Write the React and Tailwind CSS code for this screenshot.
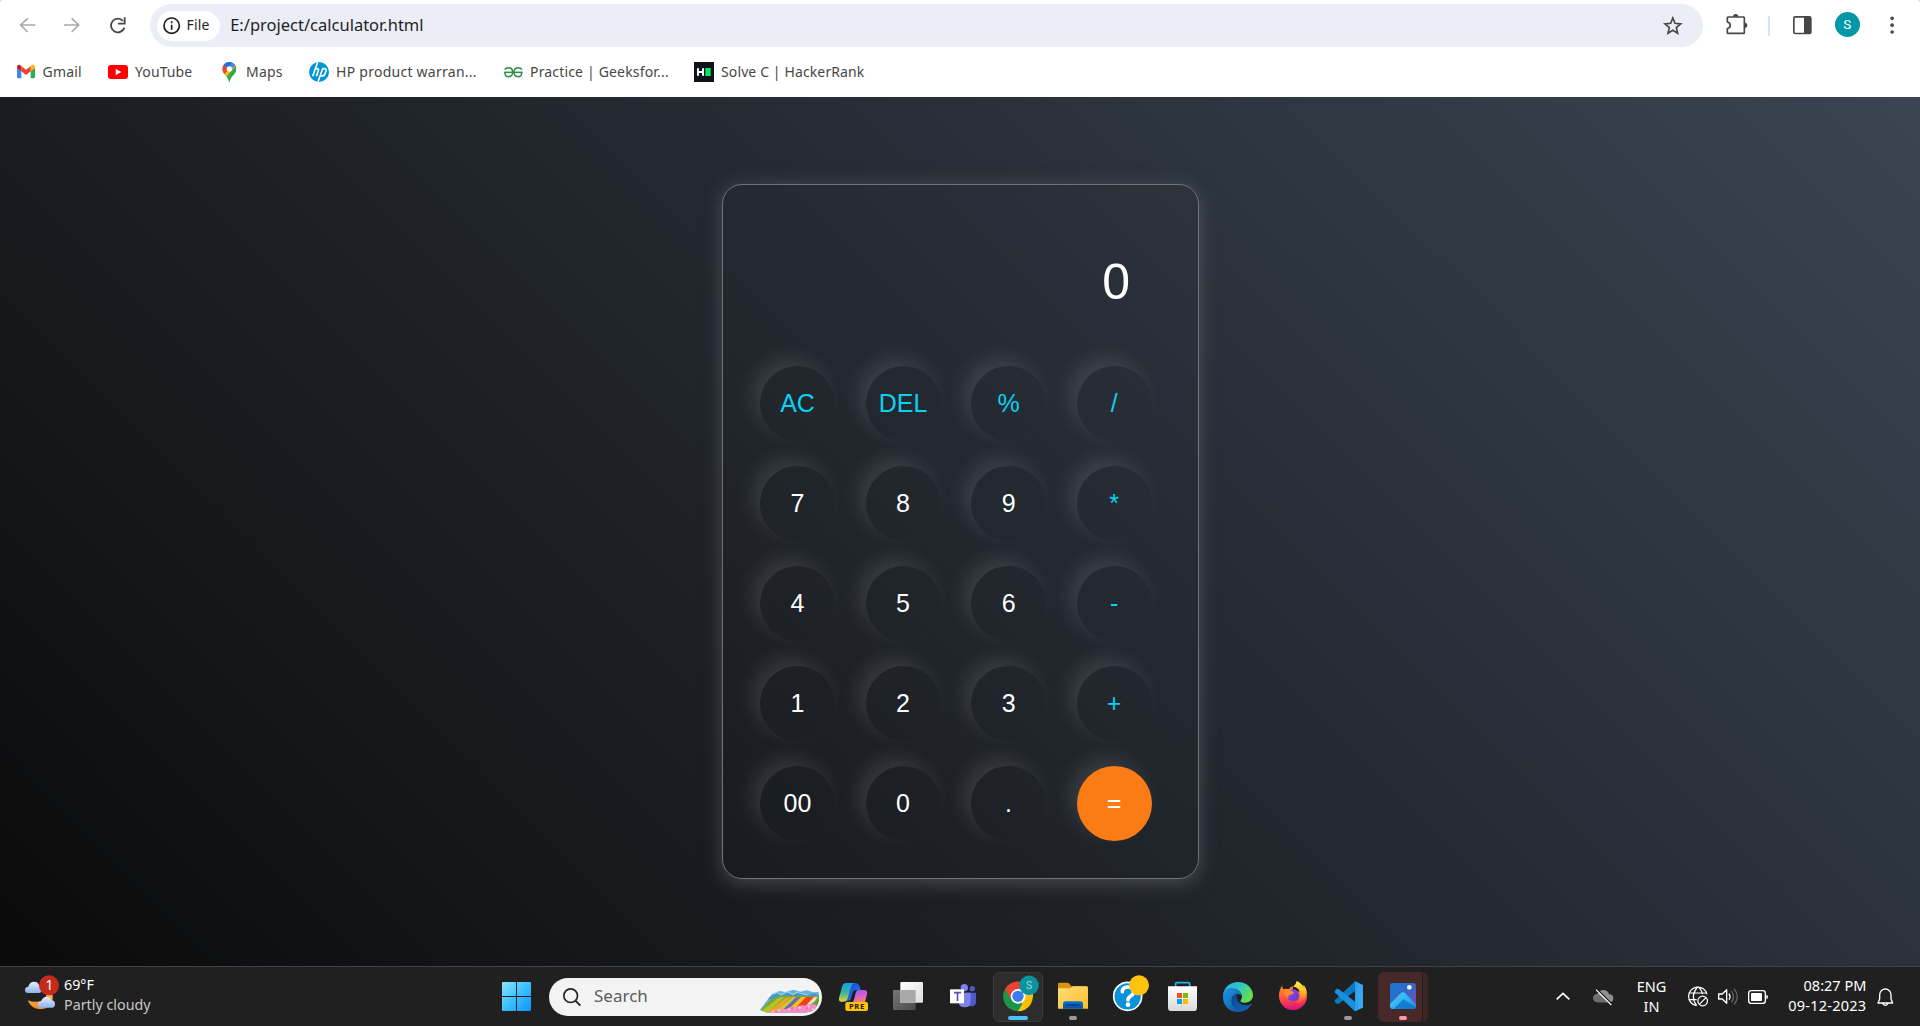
import React from "react";

/* Icons are drawn on a grid of three units per pixel. */
function Icon({ box, children, className = "" }) {
  const [, , w, h] = box.split(" ").map(Number);
  return (
    <svg
      viewBox={box}
      width={w / 3}
      height={h / 3}
      fill="none"
      className={"block shrink-0 overflow-visible " + className}
    >
      {children}
    </svg>
  );
}

const Gmail = () => (
  <Icon box="48 195 54 40">
    <path d="M48 202v29q0 4 4 4h9v-23z" fill="#4285f4" />
    <path d="M102 202v29q0 4-4 4h-9v-23z" fill="#34a853" />
    <path d="M89 199v15l13-10v-3c0-6-6-8-10-5z" fill="#fbbc04" />
    <path d="M61 214v-15l14 10 14-10v15l-14 11z" fill="#ea4335" />
    <path d="M48 201v3l13 10v-15l-3-3c-4-3-10-1-10 5z" fill="#c5221f" />
  </Icon>
);

const YouTube = () => (
  <Icon box="324 195 60 42">
    <rect x="324" y="195" width="60" height="42" rx="9" fill="#f00" />
    <path d="M347 206l17 10-17 10z" fill="#fff" />
  </Icon>
);

const Maps = () => (
  <Icon box="665 186 43 60">
    <defs>
      <clipPath id="pin">
        <path d="M687 186a21 21 0 0 1 21 21c0 15-17 20-20 37q-1 3-2 0c-3-17-20-22-20-37a21 21 0 0 1 21-21z" />
      </clipPath>
    </defs>
    <g clipPath="url(#pin)">
      <path d="M660 180h50v70h-50z" fill="#34a853" />
      <path d="M660 225l35-38 20-5v12l-40 42z" fill="#fbbc04" />
      <path d="M660 225v-40l27 22-19 19z" fill="#ea4335" />
      <path d="M668 192l12-10h18l-11 25z" fill="#1a73e8" />
      <path d="M697 182l14 12-24 15z" fill="#4285f4" />
      <path d="M712 192l-19 20-18 24 13 12 24-20z" fill="#34a853" />
    </g>
    <circle cx="687" cy="207" r="8" fill="#fff" />
  </Icon>
);

const Hp = () => (
  <Icon box="927 186 60 60">
    <circle cx="957" cy="216" r="30" fill="#0096d6" />
    <path
      d="M953 187l-15 42M944 210q3-4 7-4 6 0 4 6l-6 17M968 206l-14 39M967 206h6q7 0 5 7l-3 8q-2 7-9 7h-6"
      stroke="#fff"
      strokeWidth="5"
    />
  </Icon>
);

const Gfg = () => (
  <Icon box="132 200 56 32">
    <g stroke="#2f8d46" strokeWidth="4.5">
      <path d="M134 208q4-6 11-6 13 0 13 14 0 13-12 13-11 0-11-12" />
      <path d="M186 208q-4-6-11-6-13 0-13 14 0 13 12 13 11 0 11-12" />
      <path d="M132 216h56" />
    </g>
  </Icon>
);

const HackerRank = () => (
  <Icon box="702 186 60 60">
    <path d="M702 186h60v60h-60z" fill="#0e141e" />
    <path d="M714 205v22M729 205v22M714 216h15" stroke="#fff" strokeWidth="6" />
    <path d="M736 204h16v24h-16z" fill="#00ea64" />
  </Icon>
);

const BOOKMARKS = [
  { icon: <Gmail />, label: "Gmail", cls: "w-[92px]", text: "ml-[-0.5px] tracking-[0.2px]" },
  { icon: <YouTube />, label: "YouTube", cls: "w-[111px]", text: "tracking-[0.1px]" },
  { icon: <Maps />, label: "Maps", cls: "w-[90px]", text: "tracking-[0.2px]" },
  { icon: <Hp />, label: "HP product warran...", cls: "w-[194px]", text: "tracking-[0.26px]" },
  { icon: <Gfg />, label: "Practice | Geeksfor...", cls: "w-[191px]", text: "tracking-[0.17px]" },
  { icon: <HackerRank />, label: "Solve C | HackerRank", cls: "w-[180px]", text: "tracking-[0.12px]" },
];

function Toolbar() {
  return (
    <div className="flex h-[51px] items-center pl-[20px]">
      <Icon box="60 53 46 43" className="mr-[29px]">
        <path d="M106 74H63M83 54L62 74l21 21" stroke="#a9a9a9" strokeWidth="5" />
      </Icon>
      <Icon box="194 53 46 43" className="mr-[30px]">
        <path d="M194 74h43M217 54l21 20-21 21" stroke="#a9a9a9" strokeWidth="5" />
      </Icon>
      <Icon box="329 50 48 50" className="mr-[24px]">
        <path d="M368 62a20.500 20.500 0 1 0 4 20" stroke="#474747" strokeWidth="5.500" />
        <path d="M373 51v19h-20" stroke="#474747" strokeWidth="5.500" />
      </Icon>
      <div className="flex h-[43px] w-[1553px] items-center rounded-full bg-[#ebeef7] pl-[7px] pr-[20.5px]">
        <div className="flex h-[30px] w-[63px] items-center rounded-full bg-white pl-[6px]">
          <Icon box="488 50 52 52" className="mr-[6.5px]">
            <circle cx="514" cy="76" r="23" stroke="#1f1f1f" strokeWidth="5" />
            <path d="M514 73v15M514 63v5.500" stroke="#1f1f1f" strokeWidth="5" />
          </Icon>
          <span className="mt-[-1px] text-[14px] leading-5 tracking-[0.2px] text-[#1f1f1f]">File</span>
        </div>
        <span className="ml-[10.5px] mt-[-1px] text-[16.5px] leading-5 text-[#1f1f1f]">E:/project/calculator.html</span>
        <Icon box="188 47 59 58" className="ml-auto">
          <path
            d="M217.500 53l6.500 16 17 1.500-13 11.500 4 17-14.500-9-14.500 9 4-17-13-11.500 17-1.500z"
            stroke="#474747"
            strokeWidth="5"
          />
        </Icon>
      </div>
      <Icon box="377 42 64 62" className="ml-[23px] mr-[21px] mt-[-2px]">
        <path
          d="M383 51h47q2 0 2 2v45q0 2-2 2h-47q-2 0-2-2V86q9-2 9-10t-9-10V53q0-2 2-2z"
          stroke="#474747"
          strokeWidth="5"
          strokeLinejoin="round"
        />
        <path d="M398 50a8 8 0 0 1 16 0zM433 68a8 8 0 0 1 0 16z" fill="#474747" />
      </Icon>
      <div className="mr-[23px] h-[20px] w-[2px] bg-[#d3e3fd]" />
      <Icon box="579 48 56 55" className="mr-[23px]">
        <rect x="581.500" y="50.500" width="51" height="50" rx="4" stroke="#474747" strokeWidth="5" />
        <path d="M612 50h20v51h-20z" fill="#474747" />
      </Icon>
      <div className="mt-[-2px] flex size-[25px] items-center justify-center rounded-full bg-[#0097a7] font-['Roboto'] text-[13.5px] text-white">
        S
      </div>
      <Icon box="871 47 13 55" className="ml-[30px] mt-[-1px]">
        <g fill="#474747">
          <circle cx="877.500" cy="54" r="5.500" />
          <circle cx="877.500" cy="74.500" r="5.500" />
          <circle cx="877.500" cy="95" r="5.500" />
        </g>
      </Icon>
    </div>
  );
}

function Browser() {
  return (
    <header className="h-[97px] bg-[#d3e3fd]">
      <div className="h-full rounded-t-[4px] bg-white">
        <Toolbar />
        <div className="flex h-[42px] items-center pl-[16px]">
          {BOOKMARKS.map((b) => (
            <div key={b.label} className={"flex shrink-0 items-center " + b.cls}>
              <div className="mr-[7px] flex w-[20px] shrink-0 justify-center">{b.icon}</div>
              <span className={"whitespace-nowrap text-[14px] leading-5 text-[#474747] " + b.text}>{b.label}</span>
            </div>
          ))}
        </div>
      </div>
    </header>
  );
}

const KEYS = [
  "AC", "DEL", "%", "/",
  "7", "8", "9", "*",
  "4", "5", "6", "-",
  "1", "2", "3", "+",
  "00", "0", ".", "=",
];
const OPERATORS = ["AC", "DEL", "%", "/", "*", "-", "+"];

function Calculator() {
  return (
    <div className="mt-[87px] h-[695px] w-[477px] rounded-[20px] border border-[#717377] pl-[37.5px] pt-[65px] font-['Liberation_Sans',Arial,sans-serif] shadow-[0_3.75px_18.75px_rgba(113,115,119,0.5)]">
      <div className="mr-[67.5px] h-[116px] text-right text-[50px] leading-[64px] text-white">0</div>
      <div className="grid grid-cols-[repeat(4,75px)] gap-x-[30.55px] gap-y-[25px]">
        {KEYS.map((k) => (
          <button
            key={k}
            className={
              "flex size-[75px] items-center justify-center rounded-full text-[25px] leading-none shadow-[-8px_-8px_20px_rgba(255,255,255,0.11)] " +
              (k === "=" ? "bg-[#fb7c14] text-white" : OPERATORS.includes(k) ? "text-[#0ad1f0]" : "text-white")
            }
          >
            {k}
          </button>
        ))}
      </div>
    </div>
  );
}

const Gradient = ({ id, a, b, m, x2 = 1, y2 = 1 }) => (
  <linearGradient id={id} x1="0" y1="0" x2={x2} y2={y2}>
    <stop stopColor={a} />
    {m && <stop offset=".5" stopColor={m} />}
    <stop offset="1" stopColor={b} />
  </linearGradient>
);

const Weather = () => (
  <Icon box="75 40 102 103">
    <defs>
      <Gradient id="moon" a="#ffc34a" b="#f08a1d" x2={0} />
      <Gradient id="cloud" a="#e6effc" b="#8fb1ea" x2={0} />
    </defs>
    <path d="M138 96q4 14-10 20-20 9-45 0 10 25 37 27 25 0 36-21 6-18-3-32z" fill="url(#moon)" />
    <path d="M84 94q-9 0-9-9t10-10q4-15 17-15 13 0 16 13 8 2 7 11 0 10-9 10z" fill="url(#cloud)" />
    <path d="M123 138q-10 0-10-9t10-10q5-14 17-14 11 0 14 11 11 1 11 11 0 11-9 11z" fill="url(#cloud)" />
    <circle cx="147" cy="71" r="30" fill="#c42b1c" />
    <text x="148" y="86" textAnchor="middle" fontSize="41" fill="#fff">1</text>
  </Icon>
);

const Start = () => (
  <Icon box="66 66 87 87">
    <defs>
      <linearGradient id="win" gradientUnits="userSpaceOnUse" x1="66" y1="66" x2="153" y2="153">
        <stop stopColor="#8be4ff" />
        <stop offset=".5" stopColor="#3bc0ff" />
        <stop offset="1" stopColor="#0b93fa" />
      </linearGradient>
    </defs>
    <path
      fill="url(#win)"
      d="M69 66h39v42H66V69q0-3 3-3zM111 66h39q3 0 3 3v39h-42zM66 111h42v42H69q-3 0-3-3zM111 111h42v39q0 3-3 3h-39z"
    />
  </Icon>
);

const Fields = () => (
  <Icon box="840 88 180 71">
    <defs>
      <clipPath id="field">
        <path d="M840 150l36-47 22-9 20 3 22-7 22 6 18-4 20 6 16-1 1 20q-3 26-20 37l-22 5H860z" />
      </clipPath>
    </defs>
    <g clipPath="url(#field)">
      <path d="M840 85h180v75H840z" fill="#62b4e2" />
      <path d="M870 112l20-13 14 10 18-12 16 10 22-11 24 11 20-6 20 10v8H860z" fill="#4496cc" />
      <path d="M880 103l12-4 10 6 20-8 16 7 14-6 30 8" stroke="#a9d8f0" strokeWidth="3" />
      <path d="M835 158l36-38 30-12h120v52z" fill="#7aa83a" />
      <path d="M840 158l56-44 18-3-50 47z" fill="#b4c42c" />
      <path d="M862 158l56-44 16-3-50 47z" fill="#f0a423" />
      <path d="M884 156l54-44h10l-36 46z" fill="#d8c43a" />
      <path d="M902 156l46-43h14l-36 43z" fill="#6a6cb2" />
      <path d="M922 152l42-40h14l-32 40z" fill="#f5c01e" />
      <path d="M944 148l34-36h26l-28 34z" fill="#e8431e" />
      <path d="M972 144l30-32h10l-16 28z" fill="#f3dfb8" />
      <path d="M986 138l32-22v26z" fill="#6a9e3a" />
      <path d="M866 160q12-12 26-7 10-8 26-5 14-9 30-5 14-9 28-5 14-6 34-3v26z" fill="#f58cc8" />
      <path d="M876 156h6M894 152h6M924 149h6M956 144h6M984 141h6M996 149h6" stroke="#ffc9e7" strokeWidth="5" />
      <path d="M886 158h5M934 147h5M950 151h5M978 146h5" stroke="#ea62ad" strokeWidth="5" />
    </g>
  </Icon>
);

const Copilot = () => (
  <Icon box="57 69 87 84">
    <defs>
      <Gradient id="cpA" a="#1c9bf0" m="#35b3a0" b="#e2d430" x2={0} />
      <Gradient id="cpB" a="#8f5ff0" m="#d65bd8" b="#ff8a4c" x2={0.3} />
      <Gradient id="cpC" a="#1346c8" b="#2b7df0" />
    </defs>
    <path d="M80 69h26q10 0 13 11l3 10h-12q-10 0-13 10l-6 20-16 5z" fill="url(#cpC)" />
    <path d="M78 69h24q-6 2-9 12l-10 34q-3 10-12 10H64q-9 0-7-11l9-34q3-11 12-11z" fill="url(#cpA)" />
    <path d="M117 90h14q13 0 10 12l-8 32H95q-3-2 1-6 4-3 6-9l5-20q2-9 10-9z" fill="url(#cpB)" />
    <rect x="76" y="126" width="68" height="27" rx="6" fill="#ffc20a" />
    <text x="111" y="148" textAnchor="middle" fontSize="23" fontWeight="700" letterSpacing="2" fill="#221a00">PRE</text>
  </Icon>
);

const TaskView = () => (
  <Icon box="219 66 90 84">
    <defs>
      <Gradient id="tvA" a="#fff" b="#dcdcdc" />
      <Gradient id="tvB" a="#767676" b="#4b4b4b" />
    </defs>
    <rect x="219" y="90" width="68" height="60" rx="3" fill="url(#tvB)" />
    <rect x="241" y="66" width="68" height="62" rx="3" fill="url(#tvA)" />
    <path d="M241 90h46v38h-44q-2 0-2-2z" fill="#a9a9a9" />
  </Icon>
);

const Teams = () => (
  <Icon box="390 71 78 70">
    <circle cx="457" cy="85" r="8" fill="#5059c9" />
    <path d="M440 97h28v28q0 13-14 13h-8z" fill="#5059c9" />
    <circle cx="433" cy="82" r="11" fill="#7b83eb" />
    <path d="M416 97h36v24q0 20-18 20t-18-16z" fill="#7b83eb" />
    <rect x="390" y="87" width="42" height="42" fill="#fff" />
    <path d="M402 97h21M412.500 97v25" stroke="#4b53bc" strokeWidth="5" />
  </Icon>
);

const Chrome = () => (
  <Icon box="549 44 108 109">
    <path d="M555 86A45 45 0 0 1 633 86L594 108z" fill="#ea4335" />
    <path d="M633 86A45 45 0 0 1 594 153L594 108z" fill="#fbbc04" />
    <path d="M555 86A45 45 0 0 0 594 153L614 119 594 108z" fill="#1e9447" />
    <path d="M594 86h39q7 12 6 24l-22 10-4 7-19 26q12 0 22-6l-12-20z" fill="#fcc31e" />
    <path d="M555 86l20 33 19-33z" fill="#ea4335" />
    <circle cx="594" cy="108" r="22" fill="#fff" />
    <circle cx="594" cy="108" r="17" fill="#3b7ded" />
    <circle cx="627" cy="75" r="29.500" fill="#0a929f" />
    <text x="627" y="86" textAnchor="middle" fontFamily="Roboto" fontSize="31" fill="#9fd8de">S</text>
  </Icon>
);

const Folder = () => (
  <Icon box="714 64 90 92">
    <defs>
      <Gradient id="fo" a="#ffdf7b" b="#fdbb2b" />
      <Gradient id="foB" a="#0a74cf" b="#0450a5" x2={0} />
    </defs>
    <path d="M714 73q0-4 4-4h25q3 0 5 3l6 8h46v30h-86z" fill="#d9960c" />
    <path d="M714 86h36l9-6h41q4 0 4 4v63h-90z" fill="url(#fo)" />
    <path d="M729 147v-14q0-8 8-8h44q8 0 8 8v14z" fill="url(#foB)" />
    <path d="M740 136h38" stroke="#033a78" strokeWidth="4" strokeLinecap="round" />
  </Icon>
);

const Help = () => (
  <Icon box="879 44 108 110">
    <circle cx="923" cy="108" r="42" fill="#0a93d8" stroke="#fff" strokeWidth="5" />
    <path
      d="M907 94q0-14 17-14t17 13q0 9-9 14-8 5-8 12"
      stroke="#fff"
      strokeWidth="11"
      strokeLinecap="round"
    />
    <circle cx="924" cy="133" r="7" fill="#fff" />
    <circle cx="957" cy="75" r="30" fill="#ffc20e" />
  </Icon>
);

const Store = () => (
  <Icon box="114 66 87 87">
    <defs>
      <Gradient id="st" a="#fff" b="#d9d9d9" x2={0} />
    </defs>
    <path d="M137 82V71q0-3 3-3h36q3 0 3 3v11" stroke="#1fb5ee" strokeWidth="5" />
    <path d="M114 79h87v64q0 10-10 10h-67q-10 0-10-10z" fill="url(#st)" />
    <path d="M141 99h15v15h-15z" fill="#f25022" />
    <path d="M159 99h15v15h-15z" fill="#7fba00" />
    <path d="M141 117h15v15h-15z" fill="#00a4ef" />
    <path d="M159 117h15v15h-15z" fill="#ffb900" />
  </Icon>
);

const Edge = () => (
  <Icon box="279 63 90 90">
    <defs>
      <Gradient id="edA" a="#27a8ea" m="#2fc4c8" b="#64dd52" y2={0.5} />
      <Gradient id="edB" a="#1f9ae6" b="#0d4f9e" />
      <Gradient id="edC" a="#0c4a90" b="#1267b8" />
    </defs>
    <path d="M279 104c2-24 20-41 45-41 28 0 45 20 45 40 0 14-11 22-24 22-11 0-16-4-12-9 10-13-4-31-23-27-14 3-26 6-31 15z" fill="url(#edA)" />
    <path d="M279 108c0-18 12-27 26-27 17 0 29 10 30 25-7-11-25-9-29 5-5 17 8 40 30 40-4 1-8 2-12 2-25 0-45-18-45-45z" fill="url(#edB)" />
    <path d="M306 111c3-8 9-11 15-11-5 11 4 31 24 33 8 0 13-2 18-5 2-1 3 0 2 2-9 15-22 22-35 22-18-3-28-23-24-41z" fill="url(#edC)" />
  </Icon>
);

const Firefox = () => (
  <Icon box="447 63 84 87">
    <defs>
      <Gradient id="ffA" a="#ff9a1f" m="#ff5a3c" b="#e0127c" x2={0.1} />
      <Gradient id="ffB" a="#fff24d" m="#ffb42a" b="#ff4a3c" x2={0} />
      <Gradient id="ffC" a="#a14df0" b="#5a35c8" />
    </defs>
    <path d="M457 75q-2 7 3 13 8-3 16 0 4-8 14-10-4 6 0 12l16 5q8 0 10-12l4-8q11 14 11 32a42 42 0 0 1-84 2c-1-14 4-22 10-34z" fill="url(#ffA)" />
    <circle cx="489" cy="106" r="18" fill="url(#ffC)" />
    <path d="M500 63q-2 10-10 17 16 2 19 16 5 24-14 34 32-2 35-29 0-16-8-25l1 9q-7-15-23-22z" fill="url(#ffB)" />
    <path d="M461 92q8-5 18-2l13 8q-4 6-13 6-6 4-4 11-12-8-14-23z" fill="#ff8b22" />
  </Icon>
);

const VsCode = () => (
  <Icon box="609 62 90 92">
    <path d="M675 63l24 11v68l-24 11z" fill="#33a9f2" />
    <path d="M675 63l-60 56q-3 3 0 6l5 5q3 2 6 0l49-38z" fill="#0a78c4" />
    <path d="M675 153l-60-56q-3-3 0-6l5-5q3-2 6 0l49 38z" fill="#1b8fdc" />
    <path d="M675 63l8 4v82l-8 4z" fill="#2aa0ea" />
  </Icon>
);

const Photos = () => (
  <Icon box="780 69 78 78">
    <defs>
      <Gradient id="phA" a="#0f7bd6" m="#3767c2" b="#7b4fae" />
      <Gradient id="phB" a="#4cd2fb" b="#1a8fe3" />
      <clipPath id="ph">
        <rect x="780" y="69" width="78" height="78" rx="9" />
      </clipPath>
    </defs>
    <g clipPath="url(#ph)">
      <path d="M780 69h78v78h-78z" fill="url(#phA)" />
      <path d="M780 132l32-32q7-7 14 0l34 36v14h-80z" fill="url(#phB)" />
      <path d="M790 148l30-30 38 24v8z" fill="#0b6fc9" opacity=".75" />
    </g>
    <circle cx="838" cy="82" r="7" fill="#f4f6fb" />
  </Icon>
);

function Cell({ children, bar = "", tile = "", shift = "" }) {
  return (
    <div className="relative flex h-full w-[55px] shrink-0 items-center justify-center">
      <div className={"flex size-[50px] items-center justify-center rounded-[6px] " + tile}>
        <div className={"relative " + shift}>{children}</div>
      </div>
      {bar && <div className={"absolute bottom-[6px] h-[4px] rounded-full " + bar} />}
    </div>
  );
}

function Tray() {
  return (
    <div className="ml-auto flex items-center pr-[26px] text-white">
      <Icon box="79 96 42 25" className="mr-[22.5px]">
        <path d="M81 118l19-18 19 18" stroke="#fff" strokeWidth="5" />
      </Icon>
      <Icon box="188 84 62 48" className="mr-[22.5px]">
        <path d="M202 124q-14-2-13-15 2-10 12-10 7-13 20-12 12 1 15 12 13 1 13 13 0 12-12 12z" fill="#8f8f8f" />
        <path d="M189 110q2-11 12-11l40 25h-39q-12-1-13-14z" fill="#6e6e6e" />
        <path d="M200 85l46 46" stroke="#202020" strokeWidth="5" />
        <path d="M197 86l46 46" stroke="#fff" strokeWidth="3.500" />
      </Icon>
      <div className="mr-[21px] mt-[-2px] w-[31px] text-center text-[14.5px] leading-[20px]">
        ENG
        <br />
        IN
      </div>
      <Icon box="474 77 62 62" className="mr-[9.5px]">
        <g stroke="#fff" strokeWidth="3.600">
          <path d="M500 136a28 28 0 1 1 31-34M477 98h54M476 118h24M504 79q-26 28-4 57M504 79q12 10 13 22" />
          <circle cx="518" cy="122" r="14.500" />
          <path d="M508 132l20-20" />
        </g>
      </Icon>
      <Icon box="564 82 62 52" className="mr-[9.5px]">
        <path d="M566 100h11l13-13v41l-13-13h-11z" stroke="#fff" strokeWidth="4" strokeLinejoin="round" />
        <path d="M597 99q6 9 0 18" stroke="#fff" strokeWidth="4" />
        <path d="M604 91q13 17 0 34M612 84q20 24 0 48" stroke="#6a6a6a" strokeWidth="3.500" />
      </Icon>
      <Icon box="654 87 60 42">
        <rect x="656" y="89" width="50" height="38" rx="8" stroke="#fff" strokeWidth="4" />
        <rect x="663" y="96" width="33" height="24" rx="2" fill="#fff" />
        <path d="M709 101q5 1 5 7t-5 7z" fill="#fff" />
      </Icon>
      <div className="mt-[-3px] w-[98px] text-right text-[14.5px] leading-[20px]">
        08:27 PM
        <br />
        <span className="tracking-[0.25px]">09-12-2023</span>
      </div>
      <Icon box="1040 82 50 54" className="ml-[11px]">
        <path
          d="M1043 127l5-12v-13a17 17 0 0 1 34 0v13l5 12zM1057 128q8 12 16 0"
          stroke="#fff"
          strokeWidth="4"
          strokeLinejoin="round"
        />
      </Icon>
    </div>
  );
}

function Taskbar() {
  return (
    <footer className="flex h-[60px] items-center border-t border-[#454245] bg-[#202020]">
      <div className="flex w-[489px] items-center pl-[25px] pb-[9px]">
        <Weather />
        <div className="ml-[5px] mt-[5px] text-[14.3px] leading-[20px] text-white">
          69°F
          <br />
          <span className="text-[#c8c8c8]">Partly cloudy</span>
        </div>
      </div>
      <Cell>
        <Start />
      </Cell>
      <div className="ml-[5px] mr-[3.5px] flex h-[38px] w-[273px] shrink-0 items-center rounded-full bg-[#f3f3f3] pl-[14px]">
        <Icon box="249 81 54 54">
          <circle cx="272" cy="104" r="20.500" stroke="#222" strokeWidth="5" />
          <path d="M286 119l15 15" stroke="#222" strokeWidth="6" />
        </Icon>
        <span className="ml-[13px] mt-[-1px] text-[17px] leading-5 text-[#5c5c5c]">Search</span>
        <div className="ml-auto mr-[2px] mt-[9px]">
          <Fields />
        </div>
      </div>
      <Cell>
        <Copilot />
      </Cell>
      <Cell shift="top-[-0.5px]">
        <TaskView />
      </Cell>
      <Cell shift="top-[-1px]">
        <Teams />
      </Cell>
      <Cell tile="border border-[#3a3a3a] bg-[#2d2d2d]" bar="w-[20px] bg-[#4cc2ff]" shift="left-[3px] top-[-3.5px]">
        <Chrome />
      </Cell>
      <Cell bar="w-[8px] bg-[#9a9a9a]">
        <Folder />
      </Cell>
      <Cell shift="left-[3px] top-[-3.5px]">
        <Help />
      </Cell>
      <Cell shift="left-[-0.5px]">
        <Store />
      </Cell>
      <Cell>
        <Edge />
      </Cell>
      <Cell shift="top-[-1px]">
        <Firefox />
      </Cell>
      <Cell bar="w-[8px] bg-[#9a9a9a]" shift="left-[-0.5px]">
        <VsCode />
      </Cell>
      <Cell
        tile="border-r-[5px] border-[#3f2626] bg-[#482929] shadow-[inset_-1px_0_0_#231c1c]"
        bar="w-[8px] bg-[#ff99a4]"
        shift="left-[2px] top-[-0.5px]"
      >
        <Photos />
      </Cell>
      <Tray />
    </footer>
  );
}

export default function App() {
  return (
    <div className="flex h-[1026px] w-[1920px] flex-col overflow-hidden font-['Noto_Sans',sans-serif]">
      <Browser />
      <main className="flex h-[869px] justify-center bg-[linear-gradient(45deg,#0a0a0a,#3a4452)]">
        <Calculator />
      </main>
      <Taskbar />
    </div>
  );
}
